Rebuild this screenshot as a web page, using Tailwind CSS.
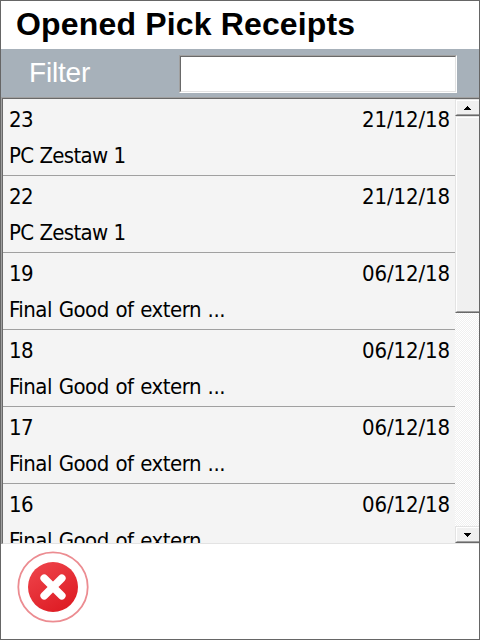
<!DOCTYPE html>
<html lang="en">
<head>
<meta charset="utf-8">
<title>Opened Pick Receipts</title>
<script src="https://cdn.jsdelivr.net/npm/@tailwindcss/browser@4"></script>
</head>
<body class="bg-white">
<div class="flex h-[640px] w-[480px] flex-col overflow-hidden border border-[#666] bg-white font-['Liberation_Sans',Arial,sans-serif] text-black">
  <h1 class="h-12 shrink-0 pl-[15px] text-[32px] leading-[46px] font-bold tracking-[0.16px] whitespace-nowrap">Opened Pick Receipts</h1>
  <div class="flex h-12 shrink-0 bg-[#a7b1ba] pl-7">
    <label for="filter" class="w-[150px] text-[28px] leading-[47px] tracking-[-0.2px] text-white">Filter</label>
    <div class="mt-1.5 h-[38px] w-[278px] border border-t-[#a0a0a0] border-r-white border-b-white border-l-[#a0a0a0]">
      <input id="filter" class="block h-full w-full border border-t-[#696969] border-r-[#e3e3e3] border-b-[#e3e3e3] border-l-[#696969] bg-white px-1 text-2xl outline-none">
    </div>
  </div>
  <div class="h-[447px] shrink-0 border-t border-l border-[#a0a0a0]">
    <div class="flex h-full overflow-hidden border-t border-b border-l border-t-[#696969] border-b-[#e3e3e3] border-l-[#696969]">
      <ul id="list" class="w-[452px] shrink-0 overflow-hidden bg-[#f4f4f4] font-['DejaVu_Sans_Condensed','DejaVu_Sans',sans-serif] text-[22px]"></ul>
      <div class="flex w-6 shrink-0 flex-col bg-[repeating-conic-gradient(#f0f0f0_0_25%,#fff_0_50%)] bg-[length:2px_2px]">
        <div class="flex h-[17px] shrink-0 items-center justify-center border-t border-b border-l border-t-[#e3e3e3] border-b-[#696969] border-l-[#e3e3e3]">
          <div class="flex h-full w-full items-center justify-center border-t border-b border-l border-t-white border-b-[#a0a0a0] border-l-white bg-[#f0f0f0]">
            <svg class="mr-0.5 h-1 w-[7px]" viewBox="0 0 7 4" shape-rendering="crispEdges"><path d="M3 0h1v1h1v1h1v1h1v1H0V3h1V2h1V1h1z"/></svg>
          </div>
        </div>
        <div class="h-[197px] shrink-0 border-t border-b border-l border-t-[#e3e3e3] border-b-[#696969] border-l-[#e3e3e3]">
          <div class="h-full border-t border-b border-l border-t-white border-b-[#a0a0a0] border-l-white bg-[#f0f0f0]"></div>
        </div>
        <div class="mt-auto h-[17px] shrink-0 border-t border-b border-l border-t-[#e3e3e3] border-b-[#696969] border-l-[#e3e3e3]">
          <div class="flex h-full w-full items-center justify-center border-t border-b border-l border-t-white border-b-[#a0a0a0] border-l-white bg-[#f0f0f0]">
            <svg class="mr-0.5 h-1 w-[7px]" viewBox="0 0 7 4" shape-rendering="crispEdges"><path d="M0 0h7v1H6v1H5v1H4v1H3V3H2V2H1V1H0z"/></svg>
          </div>
        </div>
      </div>
    </div>
  </div>
  <button class="mt-[7px] ml-4 block size-[72px]" aria-label="Close">
    <svg class="size-[72px]" viewBox="0 0 72 72" fill="none">
      <defs><linearGradient id="red" x1="0.2" y1="0" x2="0.8" y2="1"><stop offset="0" stop-color="#ee434a"/><stop offset="1" stop-color="#dd1a22"/></linearGradient></defs>
      <circle cx="36" cy="36" r="34.7" stroke="#ec8c91" stroke-width="1.8"/>
      <circle cx="36" cy="36" r="25" fill="url(#red)"/>
      <path d="M27.2 27.2l17.6 17.6M44.8 27.2L27.2 44.8" stroke="#fff" stroke-width="7.6" stroke-linecap="round"/>
    </svg>
  </button>
</div>
<script>
  const rows = [
    ['23', '21/12/18', 'PC Zestaw 1'],
    ['22', '21/12/18', 'PC Zestaw 1'],
    ['19', '06/12/18', 'Final Good of extern ...'],
    ['18', '06/12/18', 'Final Good of extern ...'],
    ['17', '06/12/18', 'Final Good of extern ...'],
    ['16', '06/12/18', 'Final Good of extern ...'],
  ];
  document.getElementById('list').innerHTML = rows.map(([id, date, name]) => `
    <li class="h-[77px] border-b border-[#a0a0a0] pt-[3px] pr-[5px] pl-1.5 whitespace-nowrap">
      <div class="flex h-9 justify-between leading-9"><span class="tracking-[-0.6px]">${id}</span><span class="tracking-[-0.1px]">${date}</span></div>
      <div class="h-9 leading-9 ${name.startsWith('PC') ? 'tracking-[-0.7px] [word-spacing:0.5px]' : 'tracking-[-0.5px] [word-spacing:0.9px]'}">${name}</div>
    </li>`).join('');
</script>
</body>
</html>
